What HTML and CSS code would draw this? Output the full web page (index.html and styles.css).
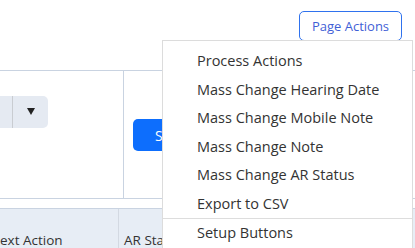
FILE: index.html
```html
<!DOCTYPE html>
<html lang="en">
<head>
    <meta charset="UTF-8">
    <meta name="viewport" content="width=device-width, initial-scale=1.0">
    <title>Page Actions</title>
    <link rel="stylesheet" href="styles.css">
</head>
<body>
    <div class="page">
        <div class="toolbar">
            <button class="page-actions">Page Actions</button>
        </div>

        <div class="filters">
            <div class="filter-cell">
                <div class="select-box">
                    <span class="select-value"></span>
                    <span class="select-arrow"><i class="caret"></i></span>
                </div>
            </div>
            <div class="filter-cell search-cell">
                <button class="search-btn">Search</button>
            </div>
        </div>

        <div class="grid-head">
            <div class="head-cell first">ext Action</div>
            <div class="head-cell">AR Status</div>
        </div>

        <!-- Page actions menu -->
        <div class="menu">
            <ul>
                <li>Process Actions</li>
                <li>Mass Change Hearing Date</li>
                <li>Mass Change Mobile Note</li>
                <li>Mass Change Note</li>
                <li>Mass Change AR Status</li>
                <li>Export to CSV</li>
                <li class="divider">Setup Buttons</li>
            </ul>
        </div>
    </div>
</body>
</html>
```

FILE: styles.css
```css
body {
    font-family: 'Open Sans', 'Liberation Sans', sans-serif;
    background-color: #ffffff;
    color: #333;
    margin: 0;
    padding: 0;
    overflow: hidden;
}

.page {
    position: relative;
    width: 415px;
    height: 248px;
    overflow: hidden;
}

.toolbar {
    display: flex;
    justify-content: flex-end;
    height: 70px;
    padding: 11px 13px 0 0;
    box-sizing: border-box;
}

.page-actions {
    font-family: inherit;
    font-size: 13px;
    color: #3f5fd6;
    background-color: #ffffff;
    border: 1px solid #2f72ee;
    border-radius: 5px;
    width: 103px;
    height: 30px;
    padding: 0;
    cursor: pointer;
}

.filters {
    display: flex;
    height: 129px;
    border-top: 1px solid #c9d3e1;
    border-bottom: 1px solid #c9d3e1;
    box-sizing: border-box;
}

.filter-cell {
    width: 123px;
    border-right: 1px solid #c9d3e1;
    padding-top: 25px;
}

.search-cell {
    width: auto;
    flex: 1;
    border-right: none;
    padding: 48px 0 0 9px;
}

.select-box {
    display: flex;
    width: 48px;
    height: 32px;
    background-color: #e5eaf2;
    border-radius: 0 5px 5px 0;
}

.select-value {
    width: 12px;
    border-right: 1px solid #c9ccd1;
}

.select-arrow {
    flex: 1;
    display: flex;
    align-items: center;
    justify-content: center;
}

.caret {
    width: 0;
    height: 0;
    margin-top: -2px;
    border-left: 4px solid transparent;
    border-right: 4px solid transparent;
    border-top: 7px solid #222;
}

.search-btn {
    font-family: inherit;
    font-size: 14px;
    color: #ffffff;
    background-color: #0d6efd;
    border: none;
    border-radius: 5px;
    height: 32px;
    padding: 0 22px;
}

.grid-head {
    display: flex;
    margin-top: 9px;
    height: 60px;
    background-color: #e7edf5;
    border-top: 1px solid #c9d3e1;
    font-size: 13.5px;
}

.head-cell {
    padding: 22px 0 0 5px;
    white-space: nowrap;
}

.head-cell.first {
    width: 119px;
    padding-left: 0;
    border-right: 1px solid #d3d9e2;
    box-sizing: border-box;
}

/* Page actions menu */
.menu {
    position: absolute;
    left: 162px;
    top: 40px;
    width: 251px;
    height: 220px;
    background-color: #ffffff;
    border: 1px solid #dcdcdc;
    box-sizing: border-box;
}

.menu ul {
    list-style-type: none;
    margin: 0;
    padding: 6px 0 0 0;
}

.menu ul li {
    font-size: 14.5px;
    line-height: 28.5px;
    padding-left: 34px;
    color: #333;
    white-space: nowrap;
}

.menu ul li.divider {
    border-top: 1px solid #dddddd;
}
```
